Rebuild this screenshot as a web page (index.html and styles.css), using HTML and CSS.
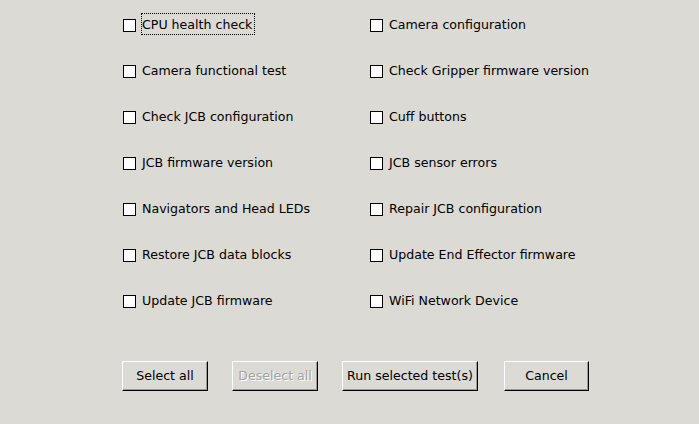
FILE: index.html
```html
<!DOCTYPE html>
<html>
<head>
<meta charset="utf-8">
<link rel="stylesheet" href="styles.css">
</head>
<body>
<div class="dialog">
  <div class="tests">
    <div class="item"><span class="box"></span><span class="label focus">CPU health check</span></div>
    <div class="item"><span class="box"></span><span class="label">Camera configuration</span></div>
    <div class="item"><span class="box"></span><span class="label">Camera functional test</span></div>
    <div class="item"><span class="box"></span><span class="label">Check Gripper firmware version</span></div>
    <div class="item"><span class="box"></span><span class="label">Check JCB configuration</span></div>
    <div class="item"><span class="box"></span><span class="label">Cuff buttons</span></div>
    <div class="item"><span class="box"></span><span class="label">JCB firmware version</span></div>
    <div class="item"><span class="box"></span><span class="label">JCB sensor errors</span></div>
    <div class="item"><span class="box"></span><span class="label">Navigators and Head LEDs</span></div>
    <div class="item"><span class="box"></span><span class="label">Repair JCB configuration</span></div>
    <div class="item"><span class="box"></span><span class="label">Restore JCB data blocks</span></div>
    <div class="item"><span class="box"></span><span class="label">Update End Effector firmware</span></div>
    <div class="item"><span class="box"></span><span class="label">Update JCB firmware</span></div>
    <div class="item"><span class="box"></span><span class="label">WiFi Network Device</span></div>
  </div>
  <div class="actions">
    <button class="btn btn-select">Select all</button>
    <button class="btn btn-deselect" disabled>Deselect all</button>
    <button class="btn btn-run">Run selected test(s)</button>
    <button class="btn btn-cancel">Cancel</button>
  </div>
</div>
</body>
</html>
```
FILE: styles.css
```css
html, body {
  margin: 0;
  padding: 0;
  background: #dcdad5;
  width: 699px;
  height: 424px;
  overflow: hidden;
}
.dialog {
  font-family: "DejaVu Sans", sans-serif;
  font-size: 12.6px;
  color: #000;
}
.tests {
  display: grid;
  grid-template-columns: 247px 247px;
  row-gap: 24px;
  padding: 13px 0 0 123px;
}
.item {
  display: flex;
  align-items: center;
  height: 22px;
}
.box {
  width: 13px;
  height: 13px;
  box-sizing: border-box;
  border: 1px solid #000;
  background: #fff;
  margin-right: 5px;
  margin-top: 2px;
  flex: none;
}
.label {
  display: flex;
  align-items: center;
  height: 22px;
  box-sizing: border-box;
  border: 1px dotted transparent;
  padding: 0 2px 0 0;
  white-space: nowrap;
}
.label.focus {
  border-color: #000;
}
.actions {
  display: flex;
  padding: 50px 0 0 122px;
}
.btn {
  height: 30px;
  box-sizing: border-box;
  margin: 0;
  padding: 0 0 2px 0;
  background: #dcdad5;
  border-top: 1px solid #fff;
  border-left: 1px solid #fff;
  border-right: 1px solid #000;
  border-bottom: 1px solid #000;
  box-shadow: inset -1px -1px 0 #9e9a91;
  font-family: "DejaVu Sans", sans-serif;
  font-size: 12.6px;
  color: #000;
  text-align: center;
}
.btn-select { width: 86px; }
.btn-deselect {
  width: 86px;
  margin-left: 24px;
  color: #a3a3a3;
  text-shadow: 1px 1px 0 #fff;
}
.btn-run { width: 136px; margin-left: 24px; }
.btn-cancel { width: 85px; margin-left: 26px; }
```
